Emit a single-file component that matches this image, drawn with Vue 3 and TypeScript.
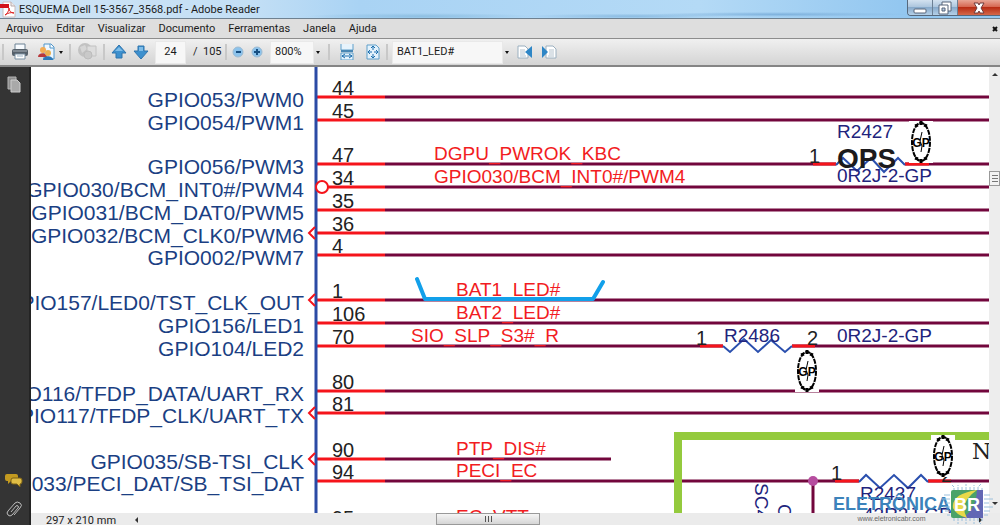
<script setup lang="ts">
import { ref } from 'vue'

interface Row {
  y: number
  pin: string
  label?: string
  net?: string
  netX?: number
  end?: number
  mark?: 'arrow' | 'circle'
}

const menus = ['Arquivo', 'Editar', 'Visualizar', 'Documento', 'Ferramentas', 'Janela', 'Ajuda']
const page = ref('24')
const zoom = ref('800%')
const find = ref('BAT1_LED#')

const rows: Row[] = [
  { y: 30, pin: '44', label: 'GPIO053/PWM0' },
  { y: 53, pin: '45', label: 'GPIO054/PWM1' },
  { y: 97, pin: '47', label: 'GPIO056/PWM3', net: 'DGPU_PWROK_KBC', netX: 403 },
  { y: 120, pin: '34', label: 'GPIO030/BCM_INT0#/PWM4', net: 'GPIO030/BCM_INT0#/PWM4', netX: 403, mark: 'circle' },
  { y: 143, pin: '35', label: 'GPIO031/BCM_DAT0/PWM5' },
  { y: 166, pin: '36', label: 'GPIO032/BCM_CLK0/PWM6', mark: 'arrow' },
  { y: 188, pin: '4', label: 'GPIO002/PWM7' },
  { y: 233, pin: '1', label: 'GPIO157/LED0/TST_CLK_OUT', net: 'BAT1_LED#', netX: 425, mark: 'arrow' },
  { y: 256, pin: '106', label: 'GPIO156/LED1', net: 'BAT2_LED#', netX: 425 },
  { y: 279, pin: '70', label: 'GPIO104/LED2', net: 'SIO_SLP_S3#_R', netX: 380 },
  { y: 324, pin: '80', label: 'GPIO116/TFDP_DATA/UART_RX' },
  { y: 346, pin: '81', label: 'GPIO117/TFDP_CLK/UART_TX', mark: 'arrow' },
  { y: 392, pin: '90', label: 'GPIO035/SB-TSI_CLK', net: 'PTP_DIS#', netX: 425, end: 580, mark: 'arrow' },
  { y: 414, pin: '94', label: 'GPIO033/PECI_DAT/SB_TSI_DAT', net: 'PECI_EC', netX: 425 },
  { y: 460, pin: '95', net: 'EC_VTT', netX: 425 },
]

const seals = [
  { x: 890, y: 75 },
  { x: 776, y: 304 },
  { x: 912, y: 389 },
]
</script>

<template>
  <div class="window">
    <header class="titlebar">
      <svg class="app-icon" width="16" height="17" viewBox="0 0 16 17">
        <path d="M3 1h8l4 4v11H3z" fill="#fff" stroke="#c9bcbc" />
        <path d="M11 1v4h4" fill="#eee" stroke="#b9a9a9" />
        <path d="M0 3h9v4H0z" fill="#d3131b" />
        <path d="M5 14c2-1 4-4 4-7 0 3 2 5 5 5-3-1-6 0-9 2z" fill="none" stroke="#d22" />
      </svg>
      <h1>ESQUEMA Dell 15-3567_3568.pdf - Adobe Reader</h1>
      <div class="controls">
        <button class="ctl" aria-label="Minimizar"><svg width="14" height="14" viewBox="0 0 14 14"><rect x="1" y="8" width="12" height="4" rx="1" fill="#fff" stroke="#56657a" /></svg></button>
        <button class="ctl" aria-label="Restaurar"><svg width="14" height="14" viewBox="0 0 14 14"><path d="M4 1h9v9H4z" fill="#fff" stroke="#56657a" /><path d="M1 4h9v9H1z" fill="#fff" stroke="#56657a" /><path d="M4 7h3v3H4z" fill="#b8cbe0" stroke="#56657a" /></svg></button>
        <button class="ctl close" aria-label="Fechar"><svg width="14" height="14" viewBox="0 0 14 14"><path d="M2 2h4l1 2 1-2h4L9 7l3 5H8l-1-2-1 2H2l3-5z" fill="#fff" stroke="#6e3b3b" /></svg></button>
      </div>
    </header>

    <nav class="menubar">
      <button v-for="m in menus" :key="m">{{ m }}</button>
      <button class="doc-close" aria-label="Fechar documento"><svg width="6" height="6" viewBox="0 0 6 6"><path d="M1 1l4 4M5 1L1 5" stroke="#111" stroke-width="2" /></svg></button>
    </nav>

    <div class="toolbar">
      <i class="sep first"></i>
      <button class="tool print" aria-label="Imprimir">
        <svg width="18" height="18" viewBox="0 0 18 18"><path d="M4 1h10v6H4z" fill="#f7fbff" stroke="#6c8294" /><rect x="1" y="6" width="16" height="7" rx="2" fill="#56616b" /><path d="M2 8h14" stroke="#aab4bc" /><path d="M4 11h10v5H4z" fill="#fff" stroke="#7890a3" /><path d="M6 13h6" stroke="#9bb5c8" /></svg>
      </button>
      <button class="tool share" aria-label="Colaborar">
        <svg width="18" height="18" viewBox="0 0 18 18"><path d="M6 1h7l3 3v12H6z" fill="#eef7ff" stroke="#4f95c9" /><path d="M12 1v4h4" fill="#fff" stroke="#4f95c9" /><circle cx="5" cy="7" r="3" fill="#f3ac54" /><path d="M0 14c0-5 9-5 9 0z" fill="#b9383b" /><circle cx="10" cy="10" r="3" fill="#eab050" /><path d="M5 17c0-5 10-5 10 0z" fill="#2d79b8" /></svg>
      </button>
      <i class="caret"></i>
      <i class="sep s1"></i>
      <button class="tool globe" aria-label="Publicar" disabled>
        <svg width="20" height="18" viewBox="0 0 20 18"><circle cx="8" cy="7" r="7" fill="#c2c2c2" /><path d="M3 4l5-2 2 4-5 4z" fill="#d6d6d6" /><path d="M10 3h9v10h-9z" fill="#ddd" stroke="#c2c2c2" /><circle cx="11" cy="12" r="4" fill="#c9c9c9" stroke="#bcbcbc" /></svg>
      </button>
      <i class="sep s2"></i>
      <button class="tool up" aria-label="Página anterior">
        <svg width="16" height="16" viewBox="0 0 16 16"><path d="M8 1l7 8h-4v5H5V9H1z" fill="#3d90ce" stroke="#2f74ad" /><path d="M8 3l4 4H4z" fill="#7fbde8" /></svg>
      </button>
      <button class="tool down" aria-label="Próxima página">
        <svg width="16" height="16" viewBox="0 0 16 16"><path d="M5 2h6v5h4l-7 8-7-8h4z" fill="#3d90ce" stroke="#2f74ad" /><path d="M6 3h4v4H6z" fill="#7fbde8" /></svg>
      </button>
      <input v-model="page" class="page" aria-label="Página" />
      <span class="total">/&nbsp; 105</span>
      <i class="sep s3"></i>
      <button class="tool minus" aria-label="Reduzir">
        <svg width="13" height="13" viewBox="0 0 13 13"><circle cx="6" cy="6" r="5" fill="#8cc3ec" stroke="#9dbbd2" /><path d="M4 6h5" stroke="#174f82" stroke-width="2" /></svg>
      </button>
      <button class="tool plus" aria-label="Ampliar">
        <svg width="13" height="13" viewBox="0 0 13 13"><circle cx="6" cy="6" r="5" fill="#8cc3ec" stroke="#9dbbd2" /><path d="M3 6h6M6 3v6" stroke="#174f82" stroke-width="2" /></svg>
      </button>
      <input v-model="zoom" class="zoom" aria-label="Zoom" />
      <i class="caret"></i>
      <i class="sep s4"></i>
      <button class="tool fit" aria-label="Ajustar à largura">
        <svg width="14" height="16" viewBox="0 0 14 16"><path d="M1 0v6h12V0" fill="#e7f3fc" stroke="#5f9fca" /><path d="M1 16V9h12v7z" fill="#e7f3fc" stroke="#5f9fca" /><path d="M1 7h12" stroke="#4987b4" stroke-width="2" /><path d="M2 12h10M5 10l-3 2 3 2M9 10l3 2-3 2" fill="none" stroke="#1c6fae" /></svg>
      </button>
      <button class="tool fit" aria-label="Ajustar à página">
        <svg width="14" height="16" viewBox="0 0 14 16"><path d="M1 1h9l3 3v11H1z" fill="#e4f2fc" stroke="#5f9fca" /><path d="M7 2v4M7 10v4M2 8h4M8 8h4M5 4l2-2 2 2M5 12l2 2 2-2M4 6L2 8l2 2M10 6l2 2-2 2" fill="none" stroke="#1c6fae" /></svg>
      </button>
      <i class="sep s5"></i>
      <input v-model="find" class="find" aria-label="Localizar" />
      <i class="caret"></i>
      <button class="tool prev" aria-label="Localizar anterior">
        <svg width="16" height="14" viewBox="0 0 16 14"><path d="M1 1h7l3 3v9H1z" fill="#fff" stroke="#9bb0c0" /><path d="M3 5h5M3 7h5M3 9h5M3 11h6" stroke="#b5c3ce" /><path d="M15 1v12L8 7z" fill="#2e86c6" /></svg>
      </button>
      <button class="tool next" aria-label="Localizar próximo">
        <svg width="16" height="14" viewBox="0 0 16 14"><path d="M5 1h7l3 3v9H5z" fill="#fff" stroke="#9bb0c0" /><path d="M8 5h5M8 7h5M8 9h5M7 11h6" stroke="#b5c3ce" /><path d="M1 1v12l6-6z" fill="#2e86c6" /></svg>
      </button>
    </div>

    <div class="body">
      <aside class="sidebar">
        <button class="tool" aria-label="Páginas">
          <svg width="14" height="17" viewBox="0 0 14 17"><path d="M1 1h8v12H1z" fill="#8e8e8e" stroke="#b5b5b5" /><path d="M4 4h6l3 3v9H4z" fill="#a9a9a9" stroke="#cdcdcd" /></svg>
        </button>
        <span class="grow"></span>
        <button class="tool" aria-label="Comentários">
          <svg width="18" height="15" viewBox="0 0 18 15"><path d="M2 1h9q2 0 2 2v3q0 2-2 2H6l-3 3V8H2Q0 8 0 6V3q0-2 2-2z" fill="#c39a20" /><path d="M8 5h7q2 0 2 2v2q0 2-2 2v3l-3-3H8q-2 0-2-2V7q0-2 2-2z" fill="#e0bd45" stroke="#7b6015" /></svg>
        </button>
        <button class="tool" aria-label="Anexos">
          <svg width="16" height="18" viewBox="0 0 16 18"><path d="M5 11l5-6q1-1 2 0t0 2l-6 7q-2 2-4 0t0-4l7-8q2-2 5 0t0 5l-6 7" fill="none" stroke="#bdbdbd" /></svg>
        </button>
      </aside>

      <main class="viewer">
        <div class="page-area">
          <svg class="sheet" width="100%" height="100%">
            <g v-for="r in rows" :key="r.pin">
              <line x1="354" :x2="r.end ?? 2400" :y1="r.y" :y2="r.y" class="wire" />
              <line x1="286" x2="354" :y1="r.y" :y2="r.y" class="stub" />
              <text v-if="r.label" x="273" :y="r.y + 10" class="label">{{ r.label }}</text>
              <text x="301" :y="r.y - 2" class="pin">{{ r.pin }}</text>
              <text v-if="r.net" :x="r.netX" :y="r.y - 4" class="net">{{ r.net }}</text>
            </g>
            <line x1="285" x2="285" y1="0" y2="2400" class="bus" />
            <template v-for="r in rows" :key="r.y">
              <path v-if="r.mark === 'arrow'" :d="`M284 ${r.y - 6}l-6 6l6 6`" class="mark" />
              <circle v-if="r.mark === 'circle'" cx="291" :cy="r.y" r="6" class="mark ring" />
            </template>

            <!-- R2427 -->
            <path d="M782 97h24M874 97h24" class="stub" />
            <path d="M805 97h69" class="gap" />
            <text x="806" y="71" class="part">R2427</text>
            <path d="M805 98l7-7l14 13l14-13l13 14l14-14l7 7" class="coil" />
            <text x="806" y="101" class="ops">OPS</text>
            <text x="806" y="115" class="part">0R2J-2-GP</text>
            <text x="778" y="96" class="pin">1</text>

            <!-- R2486 -->
            <path d="M669 279h23M760 279h24" class="stub" />
            <path d="M692 279h69" class="gap" />
            <path d="M692 279l7 6l14-13l14 13l13-12l14 12l7-6" class="coil" />
            <text x="693" y="275" class="part">R2486</text>
            <text x="806" y="275" class="part">0R2J-2-GP</text>
            <text x="665" y="278" class="pin">1</text>
            <text x="776" y="278" class="pin">2</text>

            <path d="M647 2400V369H2400" class="frame" />

            <!-- R2437 -->
            <path d="M804 414h24M897 414h23" class="stub" />
            <path d="M828 414h69" class="gap" />
            <path d="M828 415l7-7l14 13l14-13l14 13l13-13l7 7" class="coil" />
            <text x="829" y="433" class="part">R2437</text>
            <text x="832" y="454" class="part">43R2J-GP</text>
            <text x="800" y="413" class="pin">1</text>
            <text x="910" y="415" class="pin">2</text>
            <line x1="782" x2="782" y1="414" y2="2400" class="wire" />
            <circle cx="782" cy="414" r="5" fill="#b64d9f" />
            <text transform="translate(724 416) rotate(90)" class="part">SC4</text>
            <text transform="translate(747 437) rotate(90)" class="part">C</text>
            <text x="941" y="392" class="note">N</text>

            <g v-for="s in seals" :key="s.x" :transform="`translate(${s.x} ${s.y})`">
              <rect x="-12" y="-21" width="24" height="42" fill="#fff" />
              <ellipse rx="9" ry="19" class="seal" />
              <path d="M0-21v4M0 17v4M-6-16l3-1M6-16l-3-1M-6 16l3 1M6 16l-3 1" class="seal-dots" />
              <text y="5" class="seal-text">GP</text>
              <path d="M1-10l-2 9l2 5l-1 6" class="slash" />
            </g>

            <path d="M386 212l8 20h168l10-17" class="marker" />
          </svg>
          <div class="vscroll">
            <i class="tri up-tri"></i>
            <span class="vthumb"><i></i><i></i><i></i></span>
            <span class="grow"></span>
            <i class="tri down-tri"></i>
          </div>
        </div>
        <footer class="bottom">
          <span class="size">297 x 210 mm</span>
          <i class="tri left-tri"></i>
          <span class="track"><span class="hthumb"><i></i><i></i><i></i></span></span>
          <i class="tri right-tri"></i>
        </footer>
      </main>
    </div>

    <div class="watermark">
      <div class="brand"><strong>ELETRÔNICA</strong><small>www.eletronicabr.com</small></div>
      <svg class="chip" width="52" height="42" viewBox="0 0 52 42">
        <g fill="none" stroke="#9cc0dc">
          <path d="M12 9V4l-2-2M16 8V2M20 8V4M24 8V1M28 8V4M32 8V2M36 8V4l3-3M40 9V4" stroke-dasharray="4 1" />
          <path d="M12 34v5M16 34v7M20 34v4M24 34v7M28 34v4M32 34v7M36 34v4l3 3M40 34v5" stroke-dasharray="4 1" />
          <path d="M8 12H2M8 16H0M8 20H4M8 24H1M8 28H3M8 32H5M42 12h6M42 16h9M42 20h5M42 24h9M42 28h6M42 32h4" />
        </g>
        <rect x="9" y="7" width="32" height="28" rx="2" fill="#4ba269" />
        <path d="M41 7v28H20q14-8 15-28z" fill="#6267b4" />
        <path d="M35 7q-26 4-24 18 3 7 14 10-9-15 10-28z" fill="#e8d94a" />
        <text x="25" y="28" class="br">BR</text>
      </svg>
    </div>
  </div>
</template>

<style>
html,
body {
  margin: 0;
  overflow: hidden;
}
</style>

<style scoped>
.window {
  position: relative;
  display: flex;
  flex-direction: column;
  height: 100vh;
  overflow: hidden;
  background: #fff;
  color: #1b1b1b;
  font: 11px/18px Roboto, "Open Sans", sans-serif;
}
button {
  display: flex;
  align-items: center;
  justify-content: center;
  padding: 0;
  border: 0;
  background: none;
  color: inherit;
  font: inherit;
}
svg { display: block; }
.grow { flex: 1; }

.titlebar {
  display: flex;
  align-items: flex-start;
  height: 18px;
  flex: none;
  border-bottom: 1px solid #6f8190;
  background:
    radial-gradient(ellipse at 78% 80%, #7fb2dd 0, transparent 12%),
    radial-gradient(ellipse at 42% 90%, #8dbfe2 0, transparent 14%),
    radial-gradient(ellipse at 63% 90%, #8bbce2 0, transparent 12%),
    linear-gradient(90deg, #cfe4f5, #c3dff5 25%, #a9d3f4 36%, #b4daf6 70%, #93c7f0 90%);
}
h1 {
  margin: 1px 0 0 3px;
  font-size: 11px;
  font-weight: 400;
  line-height: 18px;
}
.app-icon { margin-top: 1px; }
.controls {
  display: flex;
  margin-left: auto;
  border: 1px solid #56687c;
  border-top: 0;
  border-right: 0;
  border-radius: 0 0 0 4px;
  overflow: hidden;
}
.ctl {
  width: 25px;
  height: 15px;
  border-right: 1px solid #6b7f94;
  background: linear-gradient(#d3e2f0, #a9c3dc 50%, #88aacb 50%, #b4d0e8);
}
.ctl.close {
  width: 42px;
  border-right: 0;
  background: linear-gradient(#e8a594, #d4614a 50%, #b92d14 50%, #d4684a);
}

.menubar {
  display: flex;
  flex: none;
  gap: 13px;
  height: 19px;
  padding: 0 2px 0 6px;
  border-bottom: 1px solid #8d8d8d;
  background: #dedede;
}
.doc-close { margin-left: auto; }

.toolbar {
  display: flex;
  align-items: center;
  flex: none;
  height: 26px;
  border-bottom: 2px solid #858585;
  background: linear-gradient(#f0f0f0, #d4d4d4);
}
.sep {
  flex: none;
  width: 2px;
  height: 16px;
  background: #c8c8c8;
}
.first { margin-left: 2px; }
.print { margin-left: 7px; }
.share { margin-left: 9px; }
.caret {
  flex: none;
  margin-left: 2px;
  border: 2px solid transparent;
  border-top: 3px solid #111;
  border-bottom: 0;
}
.share + .caret { margin-left: 3px; }
.s1 { margin-left: 6px; }
.globe { margin-left: 6px; }
.s2 { margin-left: 6px; }
.up { margin-left: 6px; }
.down { margin-left: 6px; }
input {
  box-sizing: border-box;
  height: 23px;
  padding: 0 4px 2px;
  border: 1px solid #e9e9e9;
  background: #f7f7f7;
  color: #1b1b1b;
  font: inherit;
}
.page { width: 31px; margin-left: 6px; padding: 0 0 2px; text-align: center; }
.total { margin-left: 7px; width: 28px; white-space: nowrap; }
.s3 { margin-left: 4px; }
.minus { margin-left: 5px; }
.plus { margin-left: 6px; }
.zoom { width: 44px; margin-left: 6px; }
.s4 { margin-left: 8px; }
.fit { margin-left: 10px; }
.fit + .fit { margin-left: 12px; }
.s5 { margin-left: 6px; }
.find { width: 111px; margin-left: 4px; }
.prev { margin-left: 8px; }
.next { margin-left: 8px; }

.body {
  display: flex;
  flex: 1;
  min-height: 0;
}
.sidebar {
  display: flex;
  flex-direction: column;
  align-items: center;
  box-sizing: border-box;
  width: 31px;
  padding: 9px 1px 6px 0;
  gap: 13px;
  border-right: 2px solid #242424;
  background: #343434;
}
.viewer {
  display: flex;
  flex-direction: column;
  flex: 1;
  min-width: 0;
}
.page-area {
  display: flex;
  flex: 1;
  min-height: 0;
}
.sheet {
  flex: 1;
  min-width: 0;
  overflow: hidden;
  font-family: "Liberation Sans", Arial, sans-serif;
}
.wire { stroke: #72063c; stroke-width: 3; }
.stub { stroke: #f5141b; stroke-width: 3; fill: none; }
.gap { stroke: #fff; stroke-width: 4; }
.bus { stroke: #2b4ba5; stroke-width: 3; }
.mark { fill: none; stroke: #f5141b; stroke-width: 2; }
.ring { fill: #fff; }
.label { font-size: 21px; fill: #1b3f83; text-anchor: end; }
.pin { font-size: 20px; fill: #222; }
.net { font-size: 19px; fill: #f21c22; }
.part { font-size: 19px; fill: #22237c; }
.ops { font-size: 28px; font-weight: 700; fill: #1c1a1c; }
.coil { fill: none; stroke: #2a4fae; stroke-width: 2; }
.frame { fill: none; stroke: #94ca3d; stroke-width: 8; }
.note { font: 22px "DejaVu Serif", serif; fill: #222; }
.seal { fill: none; stroke: #000; stroke-width: 2; stroke-dasharray: 5 1; }
.seal-dots { stroke: #000; stroke-width: 3; }
.seal-text { font: 700 12px "Liberation Sans", sans-serif; text-anchor: middle; }
.slash { fill: none; stroke: #000; stroke-width: 1; }
.marker { fill: none; stroke: #12a0ea; stroke-width: 4; stroke-linecap: round; stroke-linejoin: round; }

.vscroll {
  display: flex;
  flex-direction: column;
  align-items: center;
  box-sizing: border-box;
  width: 11px;
  padding: 6px 0 0;
  background: #ededed;
}
.tri { flex: none; border: 3px solid transparent; }
.up-tri { border-top: 0; border-bottom-color: #333; }
.down-tri { border-bottom: 0; border-top-color: #333; margin-bottom: 8px; }
.left-tri { border-left: 0; border-right-color: #333; }
.right-tri { border-right: 0; border-left-color: #333; }
.vthumb {
  display: flex;
  flex-direction: column;
  align-items: center;
  justify-content: center;
  gap: 2px;
  box-sizing: border-box;
  width: 11px;
  height: 15px;
  margin-top: 95px;
  border: 1px solid #999;
  background: #f3f3f3;
}
.vthumb i { width: 6px; height: 1px; background: #777; }
.bottom {
  display: flex;
  align-items: flex-start;
  flex: none;
  box-sizing: border-box;
  height: 12px;
  overflow: hidden;
  background: #ebebeb;
}
.size {
  box-sizing: border-box;
  width: 97px;
  padding-left: 15px;
  line-height: 16px;
}
.bottom .left-tri { margin: 4px 6px 0 7px; }
.bottom .right-tri { margin: 4px 18px 0 0; }
.track { flex: 1; }
.hthumb {
  display: flex;
  align-items: center;
  justify-content: center;
  gap: 2px;
  box-sizing: border-box;
  width: 104px;
  height: 12px;
  margin-left: 35%;
  border: 1px solid #999;
  background: linear-gradient(#f5f5f5, #d5d5d5);
}
.hthumb i { width: 1px; height: 6px; background: #555; }

/* Site badge that floats over the viewer and its scroll bars */
.watermark {
  position: absolute;
  right: 0;
  bottom: 0;
  display: flex;
  align-items: flex-end;
  pointer-events: none;
}
.brand {
  display: flex;
  flex-direction: column;
  align-items: center;
  font-family: "Liberation Sans", Arial, sans-serif;
}
.brand strong { color: #3c83bb; font-size: 18px; line-height: 18px; }
.brand small { color: #666; font-size: 7px; line-height: 12px; }
.chip { margin-left: -8px; margin-right: 6px; }
.br {
  font: 700 18px "Liberation Sans", Arial, sans-serif;
  fill: #fff;
  text-anchor: middle;
}
</style>
